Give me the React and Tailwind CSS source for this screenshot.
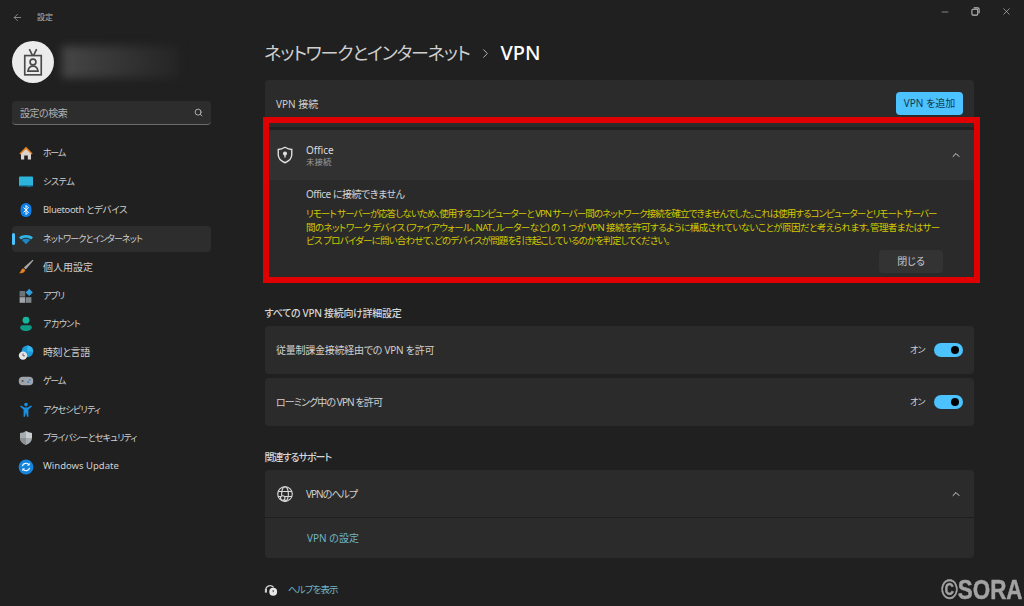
import { ArrowLeft, ChevronRight, ChevronUp, Minus, Search, X } from "lucide-react";

const HomeIcon = () => (
  <svg viewBox="0 0 16 16" className="w-4 h-4">
    <path d="M3 8 8 3.500 13 8v6.500H9.800v-4H6.200v4H3z" fill="#d9d4d0" />
    <path d="M1.400 8.400 8 1.800l6.600 6.600-1 1L8 3.900 2.400 9.400z" fill="#e8801f" />
  </svg>
);
const SystemIcon = () => (
  <svg viewBox="0 0 16 16" className="w-4 h-4">
    <rect x="1" y="2.500" width="14" height="9.500" rx="0.800" fill="#2cb4dc" />
    <rect x="1" y="11" width="14" height="1.400" fill="#1a86ab" />
    <rect x="9" y="12.200" width="4" height="0.900" fill="#166f90" />
  </svg>
);
const BluetoothIcon = () => (
  <svg viewBox="0 0 16 16" className="w-4 h-4">
    <rect x="2.600" y="1" width="10.800" height="14" rx="5.400" fill="#0f7fe8" />
    <path d="m5.600 5.600 4.800 4.600L8 12.600V3.400l2.400 2.400-4.800 4.600" fill="none" stroke="#fff" strokeWidth="1" />
  </svg>
);
const WifiIcon = () => (
  <svg viewBox="0 0 16 16" className="w-4 h-4">
    <path d="M1 6.400C4.800 3.200 11.200 3.200 15 6.400L13 8.400C10 6.200 6 6.200 3 8.400z" fill="#2fb5e6" />
    <path d="M3.800 9C6.200 7.200 9.800 7.200 12.200 9L8 13.200z" fill="#1887c4" />
  </svg>
);
const BrushIcon = () => (
  <svg viewBox="0 0 16 16" className="w-4 h-4">
    <path d="M14.600 0.800 15.400 1.600 7.800 10.400 5.800 8.600z" fill="#a9a9a9" />
    <path d="M5.200 9.200 7.200 11C6.800 13.600 4 14.600 1.200 14.200 2.800 13.200 2.800 10.200 5.200 9.200z" fill="#e8801f" />
  </svg>
);
const AppsIcon = () => (
  <svg viewBox="0 0 16 16" className="w-4 h-4">
    <rect x="1.600" y="3" width="5.600" height="5.600" fill="#6e7378" />
    <rect x="1.600" y="9.200" width="5.600" height="5.600" fill="#a2a6aa" />
    <rect x="7.800" y="9.200" width="5.600" height="5.600" fill="#80858a" />
    <path d="M11.200 0.800 14.800 4.400 11.200 8 7.600 4.400z" fill="#2f9fe0" />
  </svg>
);
const AccountIcon = () => (
  <svg viewBox="0 0 16 16" className="w-4 h-4">
    <circle cx="8" cy="4.200" r="3.400" fill="#17b59a" />
    <path d="M2.200 11.200c0-1.200 1-2 2-2h7.600c1 0 2 .8 2 2 0 2.600-2.800 3.800-5.800 3.800s-5.800-1.200-5.800-3.800z" fill="#0f9c86" />
  </svg>
);
const TimeIcon = () => (
  <svg viewBox="0 0 16 16" className="w-4 h-4">
    <circle cx="9.400" cy="6.400" r="5.800" fill="#1f9bdc" />
    <path d="M9.400.6a5.800 5.800 0 0 1 5.800 5.800H9.400z" fill="#35b7ea" />
    <circle cx="5" cy="10.600" r="4.200" fill="#e4e4e4" />
    <path d="M5 8.400v2.400h1.900" fill="none" stroke="#555" strokeWidth="0.900" />
  </svg>
);
const GameIcon = () => (
  <svg viewBox="0 0 16 16" className="w-4 h-4">
    <rect x="0.800" y="3.800" width="14.400" height="8.400" rx="4" fill="#a0a4a8" />
    <circle cx="4.600" cy="8" r="1.100" fill="#54585c" />
    <circle cx="11.800" cy="6.800" r="0.900" fill="#2a86d8" />
    <circle cx="10.200" cy="9" r="0.900" fill="#2a86d8" />
  </svg>
);
const AccessIcon = () => (
  <svg viewBox="0 0 16 16" className="w-4 h-4">
    <circle cx="8" cy="2.600" r="1.800" fill="#1a8fe0" />
    <path d="M2 4.400 3 3.400 6.400 5.600h3.200L13 3.400l1 1-3.600 3v7.400H9L8 10.600 7 14.800H5.600V7.400z" fill="#1a8fe0" />
  </svg>
);
const ShieldIcon = () => (
  <svg viewBox="0 0 16 16" className="w-4 h-4">
    <path d="M8 1c1.800 1.200 3.800 1.900 6 2v5c0 3.200-2.400 5.600-6 7-3.600-1.400-6-3.800-6-7V3c2.200-.1 4.200-.8 6-2z" fill="#a6abaf" />
    <path d="M8 1c1.800 1.200 3.800 1.900 6 2v5H8z" fill="#c9cdd0" />
    <path d="M8 8H2c0 3.200 2.400 5.600 6 7z" fill="#8b9094" />
  </svg>
);
const UpdateIcon = () => (
  <svg viewBox="0 0 16 16" className="w-4 h-4">
    <circle cx="8" cy="8" r="7.400" fill="#1584dc" />
    <path d="M4.400 7.200A3.700 3.700 0 0 1 11 5.800M11.600 8.800A3.700 3.700 0 0 1 5 10.200" fill="none" stroke="#fff" strokeWidth="1.200" />
    <path d="M11.600 3.800v2.800H8.800zM4.400 12.200V9.400h2.800z" fill="#fff" />
  </svg>
);

const navItems = [
  { label: "ホーム", icon: HomeIcon, text: "text-[9px] tracking-[-1.300px]" },
  { label: "システム", icon: SystemIcon, text: "text-[9px] tracking-[-0.350px]" },
  { label: "Bluetooth とデバイス", icon: BluetoothIcon, text: "text-[9.500px] tracking-[-0.350px]" },
  { label: "ネットワークとインターネット", icon: WifiIcon, active: true, text: "text-[9px] tracking-[-0.830px]" },
  { label: "個人用設定", icon: BrushIcon, text: "text-[10px]" },
  { label: "アプリ", icon: AppsIcon, text: "text-[9px] tracking-[-1px]" },
  { label: "アカウント", icon: AccountIcon, text: "text-[9px] tracking-[-0.500px]" },
  { label: "時刻と言語", icon: TimeIcon, text: "text-[10px] tracking-[-0.400px]" },
  { label: "ゲーム", icon: GameIcon, text: "text-[9px] tracking-[-1.300px]" },
  { label: "アクセシビリティ", icon: AccessIcon, text: "text-[9px] tracking-[-0.750px]" },
  { label: "プライバシーとセキュリティ", icon: ShieldIcon, text: "text-[9px] tracking-[-0.800px]" },
  { label: "Windows Update", icon: UpdateIcon, text: "text-[9.500px]" },
];

const errorLines = [
  {
    text: "リモート サーバーが応答しないため、使用するコンピューターと VPN サーバー間のネットワーク接続を確立できませんでした。これは使用するコンピューターとリモート サーバー",
    tracking: "tracking-[-0.950px]",
  },
  {
    text: "間のネットワーク デバイス (ファイアウォール、NAT、ルーターなど) の 1 つが VPN 接続を許可するように構成されていないことが原因だと考えられます。管理者またはサー",
    tracking: "tracking-[-0.560px]",
  },
  {
    text: "ビス プロバイダーに問い合わせて、どのデバイスが問題を引き起こしているのかを判定してください。",
    tracking: "tracking-[-0.800px]",
  },
];

const Toggle = () => (
  <div className="flex items-center gap-[9px]">
    <span className="text-[9px] tracking-[-0.600px] text-[#d0d0d0]">オン</span>
    <div className="w-[29px] h-[14px] rounded-full bg-[#4cc2ff] flex items-center justify-end pr-[4px]">
      <div className="w-[8px] h-[8px] rounded-full bg-black" />
    </div>
  </div>
);

const App = () => {
  return (
    <div className="relative flex w-[1024px] h-[606px] overflow-hidden bg-[#202020] text-[#d6d6d6] font-['Noto_Sans','Noto_Sans_CJK_JP',sans-serif] [font-feature-settings:'palt']">
      {/* sidebar */}
      <aside className="w-[222px] shrink-0 flex flex-col pl-[12px] pr-[11px]">
        <div className="flex items-center h-[34px] gap-[14px] text-[#a8a8a8]">
          <ArrowLeft className="w-[11px] h-[11px]" strokeWidth={1.6} />
          <span className="text-[8px] text-[#b4b4b4]">設定</span>
        </div>
        <div className="flex items-center mt-[7px] h-[42px]">
          <div className="w-[42px] h-[42px] rounded-full bg-[#ececec] flex items-center justify-center shrink-0">
            <svg viewBox="0 0 24 30" className="w-[22px] h-[28px]" fill="none" stroke="#4a4a4a" strokeWidth="1.800">
              <path d="M8 1l3.500 7M16 1l-3.500 7" />
              <rect x="3" y="8" width="18" height="21" />
              <circle cx="12" cy="15" r="3.200" />
              <path d="M6.500 25c.5-3.500 3-5.500 5.500-5.500s5 2 5.500 5.500z" />
            </svg>
          </div>
          <div className="ml-[8px] w-[118px] h-[32px] bg-linear-to-r from-[#464646] to-[#242424] blur-[4px]" />
        </div>
        <div className="mt-[18px] h-[24px] rounded-[4px] bg-[#2d2d2d] border-b border-[#6b6b6b] flex items-center justify-between pl-[8px] pr-[8px]">
          <span className="text-[10px] tracking-[-0.500px] pt-[1px] text-[#b0b0b0]">設定の検索</span>
          <Search className="w-[9px] h-[9px] text-[#c8c8c8]" strokeWidth={2.2} />
        </div>
        <nav className="mt-[15px] flex flex-col gap-[2.500px]">
          {navItems.map((item) => (
            <div
              key={item.label}
              className={`relative flex items-center h-[26px] rounded-[4px] pl-[6px] gap-[9px] ${item.active ? "bg-[#2d2d2d]" : ""}`}
            >
              {item.active && (
                <span className="absolute left-0 top-[7px] w-[2.500px] h-[12px] rounded-full bg-[#4cc2ff]" />
              )}
              <item.icon />
              <span className={`text-[#d0d0d0] whitespace-nowrap ${item.text}`}>{item.label}</span>
            </div>
          ))}
        </nav>
      </aside>

      {/* main */}
      <main className="w-[709px] ml-[43px] shrink-0 flex flex-col">
        <h1 className="mt-[38px] h-[30px] flex items-center font-normal whitespace-nowrap -ml-[1px]">
          <span className="text-[18px] tracking-[-1.150px] text-[#cfcfcf]">ネットワークとインターネット</span>
          <ChevronRight className="mx-[8px] w-[15px] h-[15px] text-[#bdbdbd]" strokeWidth={1.5} />
          <span className="text-[20px] text-white font-medium">VPN</span>
        </h1>

        <div className="mt-[12px] h-[47px] rounded-t-[4px] bg-[#2b2b2b] flex items-start justify-between pl-[11px] pr-[11px] pt-[12px]">
          <span className="text-[10px] text-[#d0d0d0] leading-[24px]">VPN 接続</span>
          <button className="w-[67px] h-[23px] rounded-[4px] bg-[#4cc2ff] text-[10px] text-[#10394e]">VPN を追加</button>
        </div>

        <div className="mt-[3px] h-[50px] bg-[#313131] flex items-center pl-[10px] pr-[12px]">
          <svg viewBox="0 0 16 16" className="w-[20px] h-[20px] shrink-0" fill="none" stroke="#e0e0e0" strokeWidth="1.100">
            <path d="M8 1.800c1.800 1.100 3.400 1.700 5.400 1.800v4.200c0 3-2.200 5-5.400 6.400-3.200-1.400-5.400-3.400-5.400-6.400V3.600C4.600 3.500 6.200 2.900 8 1.800z" />
            <circle cx="8" cy="6.800" r="1.100" fill="#e0e0e0" />
            <path d="M8 7.500v2.500" />
          </svg>
          <div className="ml-[11px] pt-[1px] flex flex-col">
            <span className="text-[10px] leading-[11px] text-[#dcdcdc]">Office</span>
            <span className="text-[8.500px] leading-[11px] text-[#9c9c9c]">未接続</span>
          </div>
          <ChevronUp className="ml-auto w-[12px] h-[12px] text-[#d8d8d8]" strokeWidth={2} />
        </div>

        <div className="h-[97px] bg-[#2a2a2a] pl-[41px] pr-[31px] flex flex-col">
          <p className="mt-[7px] text-[10px] tracking-[-0.500px] leading-[14px] text-[#d2d2d2] whitespace-nowrap">Office に接続できません</p>
          <div className="mt-[6px] text-[9.500px] leading-[13.500px] text-[#d2c800]">
            {errorLines.map((line) => (
              <div key={line.text} className={`whitespace-nowrap ${line.tracking}`}>{line.text}</div>
            ))}
          </div>
          <button className="mt-[2px] self-end w-[64px] h-[23px] rounded-[4px] bg-[#333333] text-[10px] text-[#c8c8c8]">閉じる</button>
        </div>

        <h2 className="mt-[29px] h-[14px] flex items-center text-[10px] tracking-[-0.300px] font-medium text-[#d6d6d6] -ml-[0.500px]">すべての VPN 接続向け詳細設定</h2>

        <div className="mt-[6px] flex flex-col gap-[4px]">
          <div className="h-[48px] rounded-[4px] bg-[#2b2b2b] flex items-center justify-between pl-[11px] pr-[11px]">
            <span className="text-[10px] tracking-[-0.250px] pt-[1px] text-[#d0d0d0]">従量制課金接続経由での VPN を許可</span>
            <Toggle />
          </div>
          <div className="h-[48px] rounded-[4px] bg-[#2b2b2b] flex items-center justify-between pl-[11px] pr-[11px]">
            <span className="text-[10px] tracking-[-0.900px] pt-[1px] text-[#d0d0d0]">ローミング中の VPN を許可</span>
            <Toggle />
          </div>
        </div>

        <h2 className="mt-[24px] h-[14px] flex items-center text-[10px] tracking-[-1px] font-medium text-[#d6d6d6] -ml-[0.500px]">関連するサポート</h2>

        <div className="mt-[6px] rounded-[4px] bg-[#2b2b2b]">
          <div className="h-[48px] flex items-center pl-[11px] pr-[12px] border-b border-[#1f1f1f]">
            <svg viewBox="0 0 16 16" className="w-[18px] h-[18px] shrink-0" fill="none" stroke="#d8d8d8" strokeWidth="1">
              <circle cx="8" cy="8" r="6.500" />
              <ellipse cx="8" cy="8" rx="3" ry="6.500" />
              <path d="M1.800 5.800h12.400M1.800 10.200h12.400" />
              <circle cx="6" cy="11.500" r="2" fill="#2b2b2b" />
              <path d="m7.500 13 1.500 1.500" />
            </svg>
            <span className="ml-[12px] pt-[1px] text-[10px] tracking-[-1px] text-[#d0d0d0]">VPNのヘルプ</span>
            <ChevronUp className="ml-auto w-[12px] h-[12px] text-[#d8d8d8]" strokeWidth={2} />
          </div>
          <div className="h-[40px] flex items-center pl-[42px]">
            <span className="text-[10px] pt-[1px] text-[#6fb6c8]">VPN の設定</span>
          </div>
        </div>

        <div className="mt-[22px] h-[20px] flex items-center gap-[10px] -ml-[1px]">
          <svg viewBox="0 0 16 16" className="w-[14px] h-[14px] shrink-0">
            <path d="M2 8a5 5 0 0 1 9-3" fill="none" stroke="#d0d0d0" strokeWidth="1.400" />
            <rect x="1" y="7" width="2.400" height="4" fill="#d0d0d0" />
            <circle cx="10.500" cy="10" r="4.500" fill="#e8e8e8" />
            <path d="M10.500 8v2.500" stroke="#333" strokeWidth="1" />
          </svg>
          <span className="text-[9.500px] tracking-[-0.900px] text-[#6fb6c8]">ヘルプを表示</span>
        </div>
      </main>

      {/* window controls */}
      <div className="absolute top-[6px] right-[12px] flex items-center gap-[21px] text-[#bdbdbd]">
        <Minus className="w-[10px] h-[10px]" strokeWidth={1.5} />
        <svg viewBox="0 0 10 10" className="w-[9px] h-[9px]" fill="none" stroke="currentColor" strokeWidth="1.200">
          <rect x="1" y="2.500" width="6.500" height="6.500" rx="1.200" />
          <path d="M3 1h4.500A1.500 1.500 0 0 1 9 2.500V7" />
        </svg>
        <X className="w-[11px] h-[11px]" strokeWidth={1.5} />
      </div>

      {/* red annotation */}
      <div className="absolute left-[263px] top-[117px] w-[717px] h-[166px] border-[6px] border-[#e00000]" />

      {/* watermark */}
      <div className="absolute right-[1px] bottom-0 text-[28px] leading-[32px] font-bold text-[#a3a3a3] font-['Liberation_Sans',sans-serif] whitespace-nowrap origin-right scale-x-[0.8] [-webkit-text-stroke:0.5px_#a3a3a3]">
        ©SORA
      </div>
    </div>
  );
};

export default App;
